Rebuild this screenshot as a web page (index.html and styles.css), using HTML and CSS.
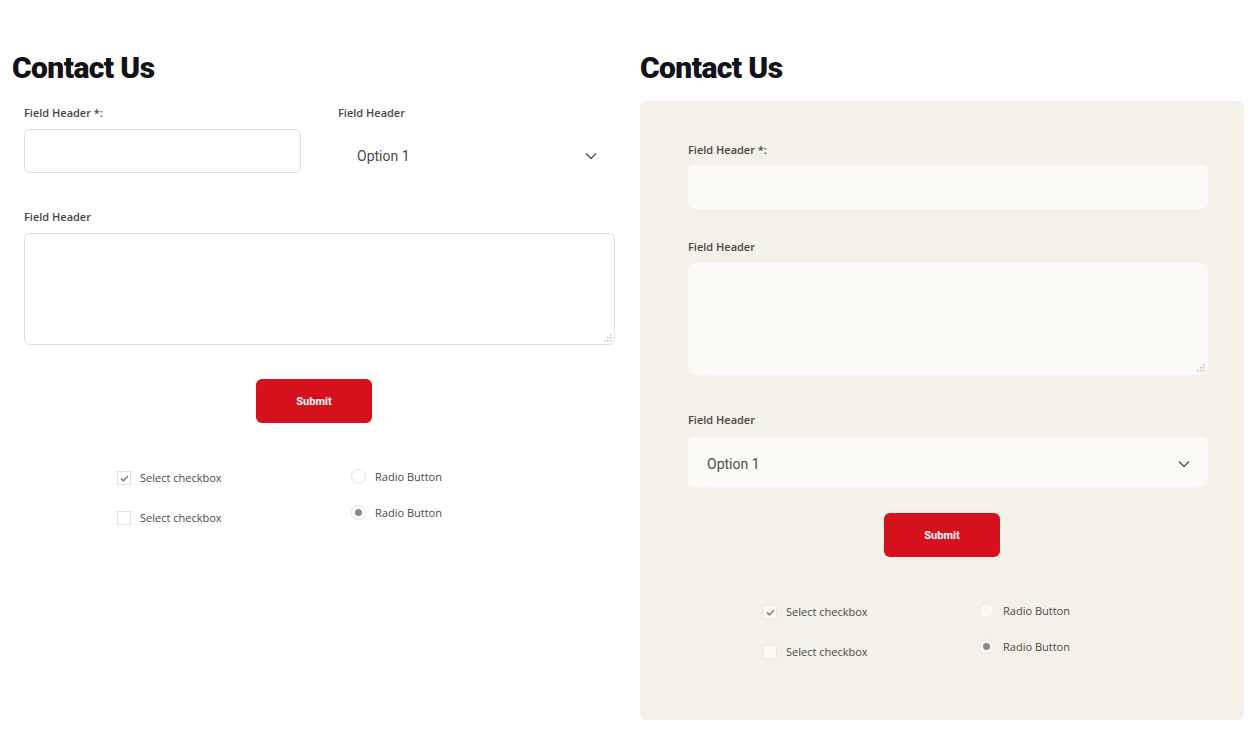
FILE: index.html
```html
<!DOCTYPE html>
<html lang="en">
<head>
    <meta charset="UTF-8">
    <meta name="viewport" content="width=device-width, initial-scale=1.0">
    <title>Contact Us</title>
    <link rel="stylesheet" href="styles.css">
</head>
<body>

<div class="page">

    <section class="column">
        <h1>Contact Us</h1>
        <form class="contact-form plain">
            <div class="row two">
                <div class="field">
                    <label class="field-label">Field Header *:</label>
                    <input type="text" class="text-input">
                </div>
                <div class="field">
                    <label class="field-label">Field Header</label>
                    <div class="select-box">
                        <span>Option 1</span>
                        <svg width="12" height="8" viewBox="0 0 12 8"><path d="M1 1.5l5 5 5-5" fill="none" stroke="#555" stroke-width="1.4"/></svg>
                    </div>
                </div>
            </div>

            <div class="field msg">
                <label class="field-label">Field Header</label>
                <div class="area-wrap">
                    <textarea class="text-area"></textarea>
                    <svg class="grip" width="8" height="8" viewBox="0 0 8 8"><g fill="#b5b5b5"><rect x="6" y="0" width="1.4" height="1.4"/><rect x="3" y="3" width="1.4" height="1.4"/><rect x="6" y="3" width="1.4" height="1.4"/><rect x="0" y="6" width="1.4" height="1.4"/><rect x="3" y="6" width="1.4" height="1.4"/><rect x="6" y="6" width="1.4" height="1.4"/></g></svg>
                </div>
            </div>

            <div class="actions">
                <button type="submit" class="submit-btn">Submit</button>
            </div>

            <div class="choices">
                <div class="choice-col checks">
                    <label class="choice"><span class="box checked"><svg width="9" height="7" viewBox="0 0 9 7"><path d="M1 3.5l2.4 2.3L8 1" fill="none" stroke="#8a8a8a" stroke-width="1.8"/></svg></span>Select checkbox</label>
                    <label class="choice"><span class="box"></span>Select checkbox</label>
                </div>
                <div class="choice-col radios">
                    <label class="choice"><span class="dot"></span>Radio Button</label>
                    <label class="choice"><span class="dot on"></span>Radio Button</label>
                </div>
            </div>
        </form>
    </section>

    <section class="column">
        <h1>Contact Us</h1>
        <form class="contact-form panel">
            <div class="field first">
                <label class="field-label">Field Header *:</label>
                <input type="text" class="text-input">
            </div>

            <div class="field msg">
                <label class="field-label">Field Header</label>
                <div class="area-wrap">
                    <textarea class="text-area"></textarea>
                    <svg class="grip" width="8" height="8" viewBox="0 0 8 8"><g fill="#b5b5b5"><rect x="6" y="0" width="1.4" height="1.4"/><rect x="3" y="3" width="1.4" height="1.4"/><rect x="6" y="3" width="1.4" height="1.4"/><rect x="0" y="6" width="1.4" height="1.4"/><rect x="3" y="6" width="1.4" height="1.4"/><rect x="6" y="6" width="1.4" height="1.4"/></g></svg>
                </div>
            </div>

            <div class="field pick">
                <label class="field-label">Field Header</label>
                <div class="select-box">
                    <span>Option 1</span>
                    <svg width="12" height="8" viewBox="0 0 12 8"><path d="M1 1.5l5 5 5-5" fill="none" stroke="#555" stroke-width="1.4"/></svg>
                </div>
            </div>

            <div class="actions">
                <button type="submit" class="submit-btn">Submit</button>
            </div>

            <div class="choices">
                <div class="choice-col checks">
                    <label class="choice"><span class="box checked"><svg width="9" height="7" viewBox="0 0 9 7"><path d="M1 3.5l2.4 2.3L8 1" fill="none" stroke="#8a8a8a" stroke-width="1.8"/></svg></span>Select checkbox</label>
                    <label class="choice"><span class="box"></span>Select checkbox</label>
                </div>
                <div class="choice-col radios">
                    <label class="choice"><span class="dot"></span>Radio Button</label>
                    <label class="choice"><span class="dot on"></span>Radio Button</label>
                </div>
            </div>
        </form>
    </section>

</div>

</body>
</html>
```

FILE: styles.css
```css
body {
    margin: 0;
    background: #fff;
    font-family: "Open Sans", Lato, sans-serif;
    color: #444;
}

.page {
    display: grid;
    grid-template-columns: 616px 604px;
    column-gap: 12px;
    padding: 50px 10px 0 12px;
}

h1 {
    margin: 0 0 15px;
    font-family: Roboto, sans-serif;
    font-weight: 900;
    font-size: 30px;
    line-height: 36px;
    color: #121218;
    letter-spacing: -0.6px;
}

.field-label {
    display: block;
    font-size: 11px;
    font-weight: 600;
    line-height: 14px;
    color: #474747;
    margin-bottom: 9px;
}

.text-input,
.text-area {
    display: block;
    box-sizing: border-box;
    width: 100%;
    border: 1px solid #dedede;
    border-radius: 6px;
    background: #fff;
    font-family: inherit;
    outline: none;
}

.text-input {
    height: 44px;
}

.area-wrap {
    position: relative;
}

.text-area {
    height: 112px;
    resize: none;
}

.grip {
    position: absolute;
    right: 3px;
    bottom: 3px;
}

.select-box {
    box-sizing: border-box;
    height: 50px;
    display: flex;
    align-items: center;
    justify-content: space-between;
    padding: 0 18px 0 19px;
    font-family: Roboto, sans-serif;
    font-size: 14px;
    color: #4a4a4a;
    border-radius: 6px;
}

.select-box span {
    padding-top: 4px;
}

.select-box svg {
    margin-top: 4px;
}

.actions {
    display: flex;
    justify-content: center;
}

.submit-btn {
    width: 116px;
    height: 44px;
    border: none;
    border-radius: 6px;
    background: #d6111e;
    color: #fff;
    font-family: Roboto, sans-serif;
    font-weight: 700;
    font-size: 11px;
    cursor: pointer;
}

.choices {
    display: flex;
}

.choice-col {
    display: flex;
    flex-direction: column;
}

.choice {
    display: flex;
    align-items: center;
    font-size: 11px;
    color: #4a4a4a;
    line-height: 14px;
}

.checks {
    gap: 26px;
}

.radios {
    gap: 21px;
    margin-top: -2px;
}

.box {
    box-sizing: border-box;
    width: 14px;
    height: 14px;
    margin-right: 9px;
    border: 1px solid #e2e2e2;
    background: #fff;
    display: flex;
    align-items: center;
    justify-content: center;
}

.dot {
    box-sizing: border-box;
    width: 15px;
    height: 15px;
    margin-right: 9px;
    border: 1px solid #e2e2e2;
    border-radius: 50%;
    background: #fff;
    display: flex;
    align-items: center;
    justify-content: center;
}

.dot.on::after {
    content: "";
    width: 7px;
    height: 7px;
    border-radius: 50%;
    background: #8a8a8a;
}

/* left, plain version */
.plain {
    padding: 5px 13px 0 12px;
}

.plain .row.two {
    display: grid;
    grid-template-columns: 1fr 1fr;
    column-gap: 37px;
}

.plain .msg {
    margin-top: 31px;
}

.plain .actions {
    margin: 34px -1px 0 -12px;
}

.plain .choices {
    margin-top: 48px;
    padding-left: 93px;
}

.plain .checks {
    width: 234px;
}

/* right, boxed version */
.panel {
    background: #f4f1e9;
    border-radius: 6px;
    padding: 42px 36px 0 48px;
    height: 619px;
    box-sizing: border-box;
}

.panel .text-input,
.panel .text-area,
.panel .select-box {
    background: #fbfaf7;
    border-color: #fbfaf7;
}

.panel .first .field-label {
    margin-bottom: 8px;
}

.panel .msg {
    margin-top: 31px;
}

.panel .pick {
    margin-top: 38px;
}

.panel .pick .field-label {
    margin-bottom: 10px;
}

.panel .actions {
    margin: 26px -36px 0 -48px;
}

.panel .choices {
    margin-top: 48px;
    padding-left: 75px;
}

.panel .checks {
    width: 216px;
}

.panel .box,
.panel .dot {
    background: #fbfaf7;
    border-color: #ebe8e0;
}
```
